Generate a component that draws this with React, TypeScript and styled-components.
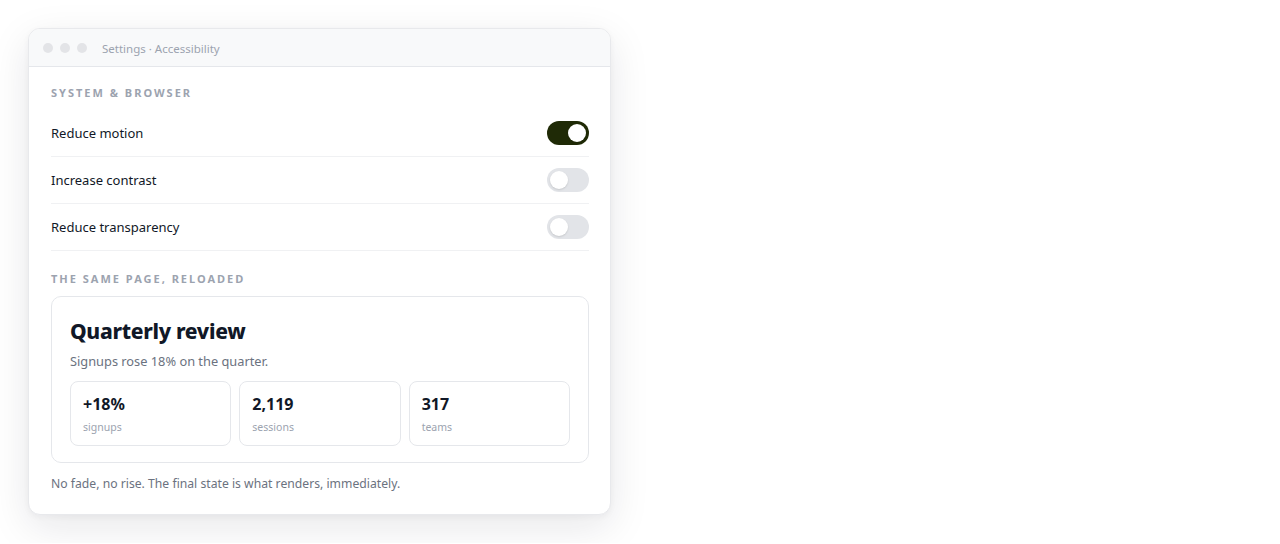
import React from "react";
import styled, { createGlobalStyle } from "styled-components";

const Global = createGlobalStyle`
  body {
    margin: 0;
    background: #ffffff;
    font-family: "Noto Sans", "Open Sans", sans-serif;
    -webkit-font-smoothing: antialiased;
  }
`;

const Page = styled.div`
  padding: 28px;
  display: flex;
  align-items: flex-start;
`;

const Window = styled.div`
  width: 583px;
  box-sizing: border-box;
  background: #ffffff;
  border: 1px solid #e8e9ec;
  border-radius: 12px;
  box-shadow: 0 12px 40px rgba(17, 24, 39, 0.1), 0 2px 6px rgba(17, 24, 39, 0.04);
  overflow: hidden;
`;

const TitleBar = styled.div`
  height: 38px;
  box-sizing: border-box;
  display: flex;
  align-items: center;
  padding: 1px 14px 0;
  gap: 7px;
  background: #f8f9fa;
  border-bottom: 1px solid #e5e7eb;
`;

const Dot = styled.span`
  width: 10px;
  height: 10px;
  border-radius: 50%;
  background: #e3e4e7;
`;

const WindowTitle = styled.span`
  margin-left: 8px;
  font-size: 11.5px;
  color: #9ca3af;
`;

const Body = styled.div`
  padding: 18px 21px 21px 22px;
`;

const SectionLabel = styled.div<{ $top?: number }>`
  margin-top: ${(p) => p.$top ?? 0}px;
  font-size: 11px;
  line-height: 16px;
  font-weight: 700;
  letter-spacing: 2px;
  text-transform: uppercase;
  color: #9ca3af;
  margin-bottom: 9px;
`;

const Row = styled.div`
  height: 47px;
  box-sizing: border-box;
  display: flex;
  align-items: center;
  justify-content: space-between;
  border-bottom: 1px solid #f0f1f3;
  padding-bottom: 1px;
`;

const RowLabel = styled.span`
  font-size: 13px;
  color: #111827;
`;

const Toggle = styled.span<{ $on: boolean }>`
  width: 42px;
  height: 24px;
  border-radius: 12px;
  box-sizing: border-box;
  padding: 3px;
  display: flex;
  justify-content: ${(p) => (p.$on ? "flex-end" : "flex-start")};
  background: ${(p) => (p.$on ? "#1f2a06" : "#e2e4e8")};
`;

const Knob = styled.span`
  width: 18px;
  height: 18px;
  border-radius: 50%;
  background: #ffffff;
  box-shadow: 0 1px 2px rgba(0, 0, 0, 0.12);
`;

const Card = styled.div`
  border: 1px solid #e5e7eb;
  border-radius: 10px;
  padding: 20px 18px 16px 18px;
`;

const CardTitle = styled.h2`
  margin: 0;
  font-size: 21px;
  line-height: 28px;
  font-weight: 800;
  color: #111827;
  letter-spacing: -0.3px;
`;

const CardText = styled.p`
  margin: 7px 0 11px;
  font-size: 12.8px;
  line-height: 18px;
  color: #6b7280;
`;

const Stats = styled.div`
  display: grid;
  grid-template-columns: repeat(3, 1fr);
  gap: 8px;
`;

const Stat = styled.div`
  border: 1px solid #e5e7eb;
  border-radius: 8px;
  padding: 11px 12px 10px;
  display: flex;
  flex-direction: column;
  gap: 5px;
`;

const StatValue = styled.div`
  font-size: 16px;
  line-height: 22px;
  font-weight: 700;
  color: #111827;
`;

const StatLabel = styled.div`
  font-size: 10.5px;
  line-height: 15px;
  color: #9ca3af;
`;

const Footnote = styled.p`
  margin: 12px 0 0;
  font-size: 12.2px;
  line-height: 18px;
  color: #6b7280;
`;

const settings = [
  { label: "Reduce motion", on: true },
  { label: "Increase contrast", on: false },
  { label: "Reduce transparency", on: false },
];

const stats = [
  { value: "+18%", label: "signups" },
  { value: "2,119", label: "sessions" },
  { value: "317", label: "teams" },
];

export default function App() {
  return (
    <>
      <Global />
      <Page>
        <Window>
          <TitleBar>
            <Dot />
            <Dot />
            <Dot />
            <WindowTitle>Settings · Accessibility</WindowTitle>
          </TitleBar>
          <Body>
            <SectionLabel>System &amp; Browser</SectionLabel>
            {settings.map((s) => (
              <Row key={s.label}>
                <RowLabel>{s.label}</RowLabel>
                <Toggle $on={s.on}>
                  <Knob />
                </Toggle>
              </Row>
            ))}
            <SectionLabel $top={20}>The same page, reloaded</SectionLabel>
            <Card>
              <CardTitle>Quarterly review</CardTitle>
              <CardText>Signups rose 18% on the quarter.</CardText>
              <Stats>
                {stats.map((s) => (
                  <Stat key={s.label}>
                    <StatValue>{s.value}</StatValue>
                    <StatLabel>{s.label}</StatLabel>
                  </Stat>
                ))}
              </Stats>
            </Card>
            <Footnote>No fade, no rise. The final state is what renders, immediately.</Footnote>
          </Body>
        </Window>
      </Page>
    </>
  );
}
